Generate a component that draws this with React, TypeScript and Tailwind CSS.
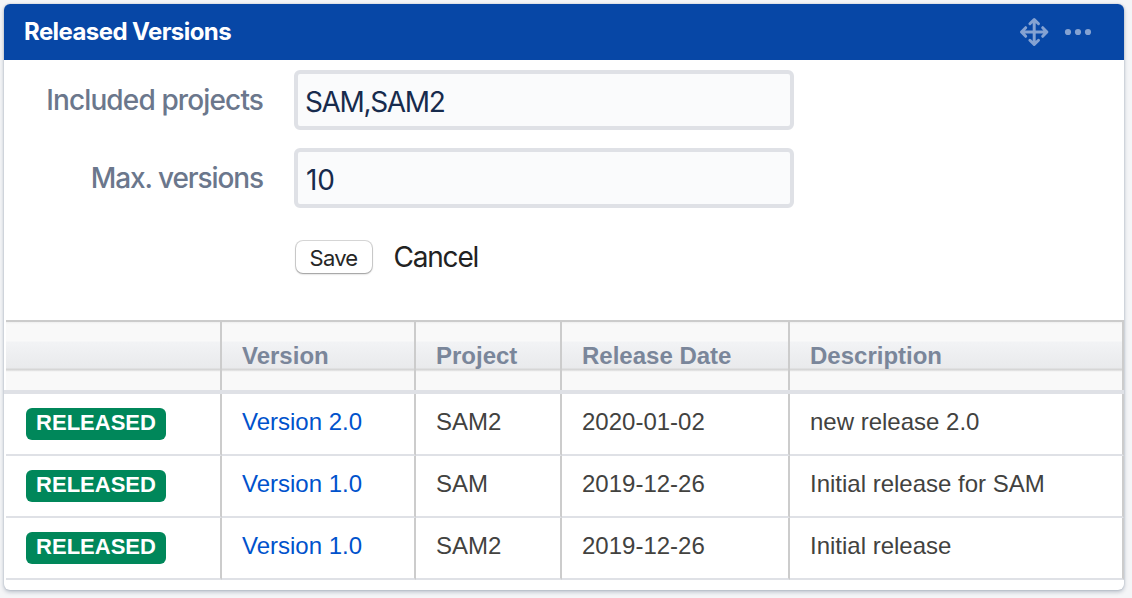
import React from "react";

const columns = ["", "Version", "Project", "Release Date", "Description"];

const rows = [
  { version: "Version 2.0", project: "SAM2", date: "2020-01-02", description: "new release 2.0" },
  { version: "Version 1.0", project: "SAM", date: "2019-12-26", description: "Initial release for SAM" },
  { version: "Version 1.0", project: "SAM2", date: "2019-12-26", description: "Initial release" },
];

const grid = "grid grid-cols-[216px_194px_146px_228px_334px]";

function Field({ label, labelClass, value, valueClass }: { label: string; labelClass: string; value: string; valueClass: string }) {
  return (
    <label className="flex h-[60px] items-center">
      <span className={`w-[259px] text-right text-[28px] leading-[60px] font-medium text-[#6b778c] ${labelClass}`}>{label}</span>
      <input
        className={`ml-[31px] h-[60px] w-[500px] rounded-[6px] border-4 border-[#dfe1e6] bg-[#fafbfc] pt-1 text-[28px] text-[#172b4d] outline-none ${valueClass}`}
        defaultValue={value}
      />
    </label>
  );
}

function MoveIcon() {
  return (
    <svg width="30" height="30" viewBox="0 0 30 30" fill="none" stroke="#84a2d2" strokeWidth="3" strokeLinecap="round" strokeLinejoin="round">
      <path d="M15.2 3v24M3 15h24.4M10.9 6.7l4.3-4.2 4.3 4.2M10.9 23.3l4.3 4.2 4.3-4.2M6.7 10.7L2.5 15l4.2 4.3M23.7 10.7l4.2 4.3-4.2 4.3" />
    </svg>
  );
}

function MoreIcon() {
  return (
    <svg width="28" height="8" viewBox="0 0 28 8" fill="#84a2d2">
      <circle cx="4" cy="4" r="3.1" />
      <circle cx="14" cy="4" r="3.1" />
      <circle cx="24" cy="4" r="3.1" />
    </svg>
  );
}

export default function App() {
  return (
    <div className="h-[598px] w-[1132px] overflow-hidden bg-[#f4f5f7] p-1 font-[Inter,sans-serif]">
      <section className="h-[586px] w-[1120px] overflow-hidden rounded-[6px] bg-white shadow-[0_2px_4px_rgba(9,30,66,0.25),0_0_2px_rgba(9,30,66,0.2)]">
        <header className="flex h-14 items-center bg-[#0747a6] pr-[32.5px] pl-5">
          <h1 className="flex-1 text-[24px] leading-[56px] font-bold tracking-[-0.58px] text-white">Released Versions</h1>
          <MoveIcon />
          <div className="ml-[14.5px]">
            <MoreIcon />
          </div>
        </header>

        <form className="flex h-[260px] flex-col gap-[18px] pt-[10px]" onSubmit={(e) => e.preventDefault()}>
          <Field label="Included projects" labelClass="tracking-[-0.87px]" value="SAM,SAM2" valueClass="pl-[7px] tracking-[-1.35px]" />
          <Field label="Max. versions" labelClass="tracking-[-1.1px]" value="10" valueClass="pl-2 tracking-[-0.1px]" />
          <div className="mt-[15px] ml-[292px] flex h-[32px] items-center">
            <button
              type="button"
              className="h-[32px] w-[76px] rounded-[7px] bg-white pt-px pr-px text-[22px] leading-[30px] tracking-[-0.75px] text-[#262626] shadow-[0_0_0_1px_rgba(0,0,0,0.15),0_1px_2px_rgba(0,0,0,0.3)]"
            >
              Save
            </button>
            <button type="button" className="ml-[21.5px] text-[28px] leading-[34px] tracking-[-1.2px] text-[#222222]">
              Cancel
            </button>
          </div>
        </form>

        <div role="table" className="font-['Liberation_Sans',Arial,sans-serif] text-[24px]">
          <div className="ml-[2px] border-t-2 border-[#cccccc]">
            <div role="row" className={`${grid} h-[68px] bg-[linear-gradient(to_bottom,#efefef_0px,#f9f9f9_2px,#f9f9f9_19px,#f2f3f5_20px,#e9eaec_46px,#d6d6d6_47px,#d6d6d6_48px,#efefef_49px,#f9f9f9_50px)]`}>
              {columns.map((c) => (
                <div key={c} role="columnheader" className="border-r-2 border-[#cccccc] pl-5 leading-[67px] font-bold text-[#7a869a]">
                  {c}
                </div>
              ))}
            </div>
          </div>
          <div className="h-1 bg-[#dfe1e6]" />
          {rows.map((r, i) => (
            <div key={i} role="row" className={`${grid} ml-[2px] h-[62px] leading-[56px] text-[#42423f] *:border-r-2 *:border-r-[#cccccc] *:border-b-2 *:border-b-[#dfe1e6] *:pl-5`}>
              <div role="cell" className="pt-[14px]">
                <span className="block h-8 w-[140px] rounded-[6px] bg-[#00875a] text-center text-[22px] leading-[29px] font-bold text-white">RELEASED</span>
              </div>
              <div role="cell" className="text-[#0052cc]">{r.version}</div>
              <div role="cell">{r.project}</div>
              <div role="cell">{r.date}</div>
              <div role="cell">{r.description}</div>
            </div>
          ))}
        </div>
      </section>
    </div>
  );
}
